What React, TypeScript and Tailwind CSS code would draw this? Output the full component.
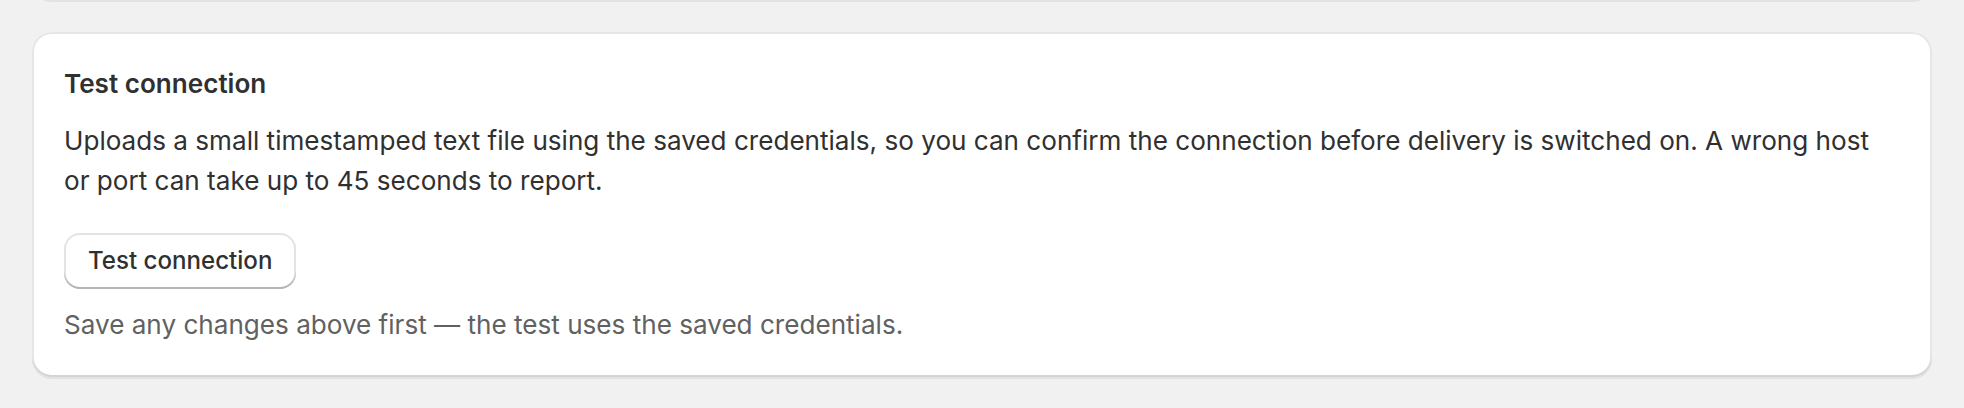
import React from 'react';

const font = { fontFamily: 'Inter, "Noto Sans", sans-serif' };

const cardShadow =
  'shadow-[0_2px_0_0_rgba(26,26,26,0.07),inset_0_-2px_0_0_#d4d4d4,inset_0_0_0_2px_#e6e6e6]';

const TestConnectionCard: React.FC = () => {
  return (
    <section className={`rounded-[20px] bg-white p-8 ${cardShadow}`}>
      <h2 className="text-[26.1px] leading-[40px] font-semibold text-[#303030]">Test connection</h2>
      <p className="mt-[17px] max-w-[1840px] text-[26.1px] leading-[40px] text-[#303030]">
        Uploads a small timestamped text file using the saved credentials, so you can confirm the connection before
        delivery is switched on. A wrong host or port can take up to 45 seconds to report.
      </p>
      <button
        type="button"
        className="mt-8 h-14 rounded-[16px] bg-white px-6 text-[24.1px] font-medium text-[#303030] shadow-[inset_0_-2px_0_0_#b5b5b5,inset_0_0_0_2px_#e3e3e3]"
      >
        Test connection
      </button>
      <p className="mt-4 text-[26.1px] leading-[40px] text-[#616161]">
        Save any changes above first — the test uses the saved credentials.
      </p>
    </section>
  );
};

export default function App() {
  return (
    <div className="flex min-h-screen flex-col bg-[#f1f1f1] px-8" style={font}>
      {/* bottom edge of the card above */}
      <div className={`-mt-[40px] h-[40px] shrink-0 rounded-[20px] bg-white ${cardShadow}`} />
      <div className="mt-8">
        <TestConnectionCard />
      </div>
    </div>
  );
}
